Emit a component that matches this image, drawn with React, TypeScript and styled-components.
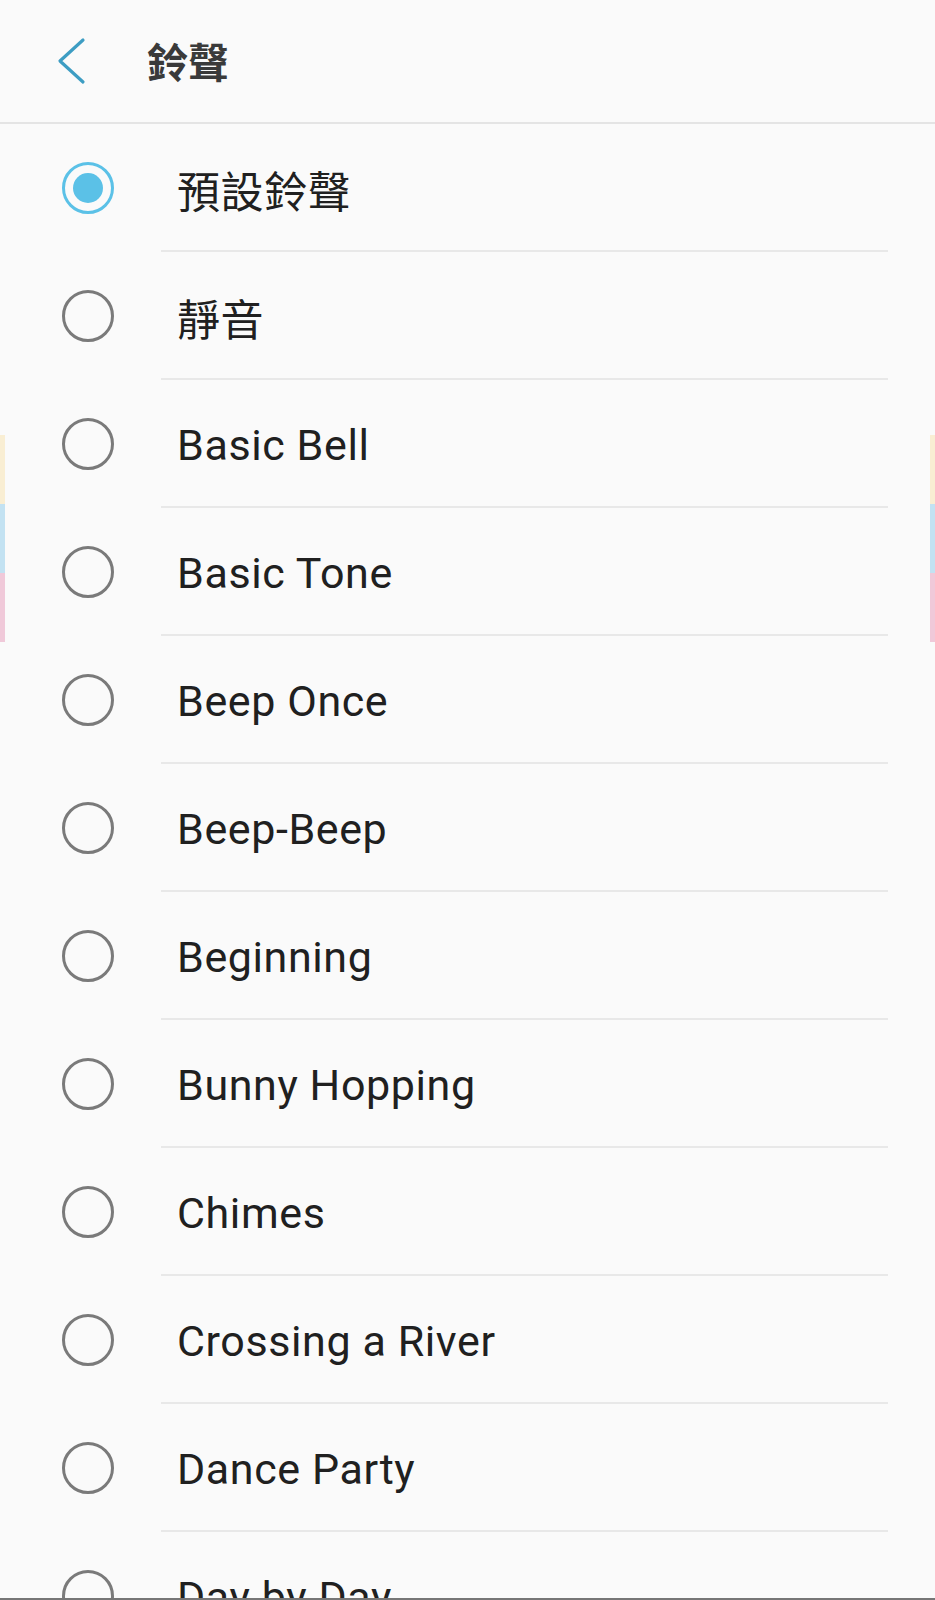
import React from 'react';
import styled, { createGlobalStyle } from 'styled-components';

const TONES = [
  '預設鈴聲',
  '靜音',
  'Basic Bell',
  'Basic Tone',
  'Beep Once',
  'Beep-Beep',
  'Beginning',
  'Bunny Hopping',
  'Chimes',
  'Crossing a River',
  'Dance Party',
  'Day by Day',
];

const GlobalStyle = createGlobalStyle`
  html, body {
    margin: 0;
    padding: 0;
    background: #fafafa;
  }
  * {
    box-sizing: border-box;
  }
`;

const Screen = styled.div`
  background: #fafafa;
  display: flex;
  flex-direction: column;
  font-family: Roboto, 'Noto Sans CJK TC', sans-serif;
  height: 1600px;
  overflow: hidden;
  position: relative;
  width: 935px;
`;

const Header = styled.header`
  align-items: center;
  border-bottom: 2px solid #e4e4e4;
  display: flex;
  flex-shrink: 0;
  height: 124px;
  padding-left: 57px;
`;

const BackButton = styled.button`
  background: transparent;
  border: 0;
  cursor: pointer;
  display: flex;
  height: 48px;
  margin-right: 60px;
  padding: 0;
  width: 30px;
`;

const Title = styled.h1`
  color: #3a3a3a;
  font-family: 'Noto Sans CJK TC', sans-serif;
  font-size: 41px;
  font-weight: 700;
  letter-spacing: 0;
  margin: 0 0 2px;
`;

const List = styled.ul`
  flex: 1;
  list-style: none;
  margin: 0;
  overflow: hidden;
  padding: 0;
`;

const Row = styled.li`
  cursor: pointer;
  display: flex;
  height: 128px;
`;

const RadioCell = styled.div`
  align-items: center;
  display: flex;
  flex-shrink: 0;
  padding-left: 62px;
  width: 161px;
`;

const Radio = styled.span<{ $checked: boolean }>`
  align-items: center;
  border: 3px solid ${({ $checked }) => ($checked ? '#5bc1e7' : '#7a7a7a')};
  border-radius: 50%;
  display: flex;
  height: 52px;
  justify-content: center;
  width: 52px;

  &::after {
    background: #5bc1e7;
    border-radius: 50%;
    content: '';
    display: ${({ $checked }) => ($checked ? 'block' : 'none')};
    height: 30px;
    width: 30px;
  }
`;

const Label = styled.div`
  align-items: center;
  border-bottom: 2px solid #e8e8e8;
  color: #202020;
  display: flex;
  flex: 1;
  font-size: 43px;
  letter-spacing: 0.6px;
  margin-right: 47px;
  padding-left: 16px;
  padding-top: 3px;
  white-space: nowrap;
`;

const EdgeStripes = styled.div<{ $side: 'left' | 'right' }>`
  display: flex;
  flex-direction: column;
  position: absolute;
  top: 435px;
  width: 5px;
  ${({ $side }) => ($side === 'left' ? 'left: 0;' : 'right: 0;')}
`;

const Stripe = styled.span<{ $color: string }>`
  background: ${({ $color }) => $color};
  height: 69px;
`;

const BottomEdge = styled.div`
  background: #767676;
  flex-shrink: 0;
  height: 2px;
`;

const STRIPE_COLORS = ['#f9eed3', '#c3e2f2', '#f0c9d9'];

export default function App() {
  const [selected, setSelected] = React.useState(TONES[0]);
  return (
    <Screen>
      <GlobalStyle />
      <Header>
        <BackButton aria-label="Back" type="button">
          <svg width="30" height="48" viewBox="0 0 30 48" fill="none">
            <polyline
              points="26,3 3,24 26,45"
              stroke="#3d9dc3"
              strokeWidth="3.2"
              strokeLinecap="round"
              strokeLinejoin="round"
            />
          </svg>
        </BackButton>
        <Title>鈴聲</Title>
      </Header>
      <List>
        {TONES.map(tone => (
          <Row key={tone} onClick={() => setSelected(tone)}>
            <RadioCell>
              <Radio $checked={selected === tone} />
            </RadioCell>
            <Label>{tone}</Label>
          </Row>
        ))}
      </List>
      <BottomEdge />
      {(['left', 'right'] as const).map(side => (
        <EdgeStripes key={side} $side={side}>
          {STRIPE_COLORS.map(color => (
            <Stripe key={color} $color={color} />
          ))}
        </EdgeStripes>
      ))}
    </Screen>
  );
}
